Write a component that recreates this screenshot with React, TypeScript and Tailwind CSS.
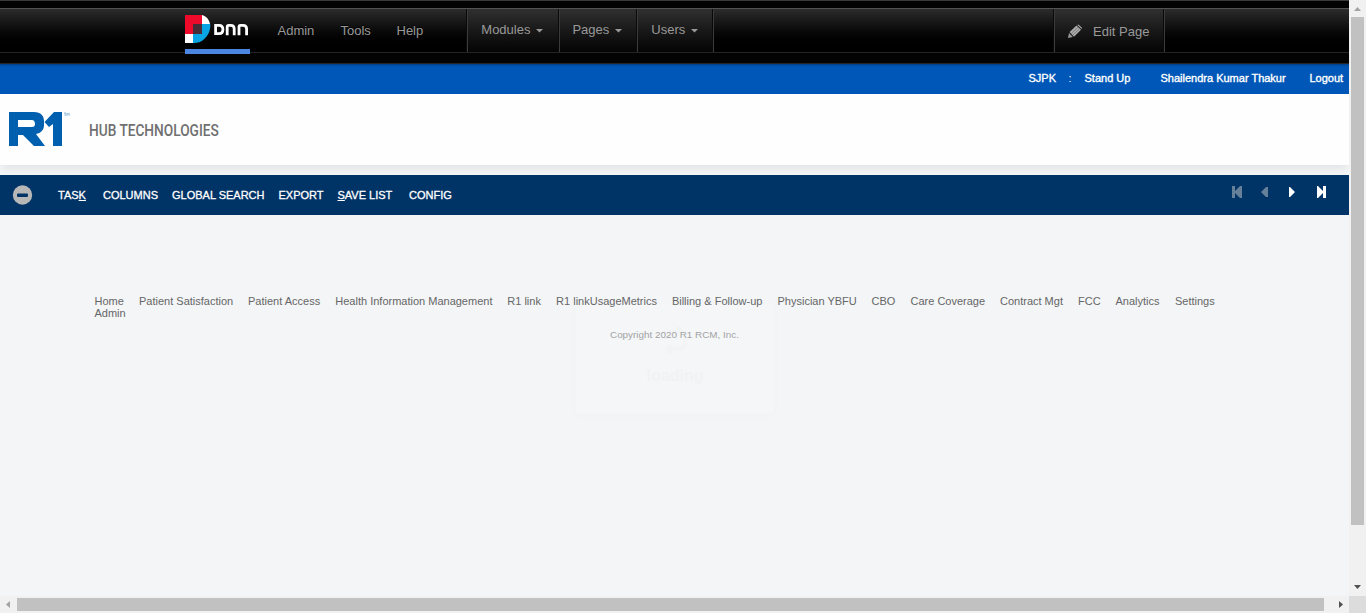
import React from "react";

const footerLinks: { label: string; slot: string }[] = [
  { label: "Home", slot: "w-[44.5px]" },
  { label: "Patient Satisfaction", slot: "w-[109px]" },
  { label: "Patient Access", slot: "w-[87.3px]" },
  { label: "Health Information Management", slot: "w-[172px]" },
  { label: "R1 link", slot: "w-[48.8px]" },
  { label: "R1 linkUsageMetrics", slot: "w-[115.8px]" },
  { label: "Billing & Follow-up", slot: "w-[105.6px]" },
  { label: "Physician YBFU", slot: "w-[94px]" },
  { label: "CBO", slot: "w-[39px]" },
  { label: "Care Coverage", slot: "w-[89.5px]" },
  { label: "Contract Mgt", slot: "w-[78px]" },
  { label: "FCC", slot: "w-[37.5px]" },
  { label: "Analytics", slot: "w-[59.5px]" },
  { label: "Settings", slot: "w-[45px]" },
];

function DnnLogo() {
  return (
    <div className="flex h-[45px] w-[65px] flex-col justify-between border-b-[5px] border-[#4b86e2] pt-[6px]">
      <svg width="65" height="30" viewBox="0 0 65 30">
        <path d="M0 0h17v9H8v10H0z" fill="#ef0a2b" />
        <path d="M17 0c4 1 7 4 8 9h-8z" fill="#fff" />
        <path d="M17 9h8.200c.5 6-1.500 11-6 15-3 3-6 4-11.200 4v-9h9z" fill="#08a4e4" />
        <path d="M8 9h9v10H8z" fill="#472b35" />
        <path d="M0 19h8v9H0z" fill="#fff" />
        <g fill="none" stroke="#fff" strokeWidth="2.800">
          <path d="M30.600 10.400h3.500c2.600 0 3.800 1.500 3.800 4.100s-1.200 4.200-3.800 4.200h-3.500z" />
          <path d="M42.200 20.300v-8.400q0-1.500 1.500-1.500h2.200q3.300 0 3.300 3.300v6.600" />
          <path d="M54 20.300v-8.400q0-1.500 1.500-1.500h2.500q3.600 0 3.600 3.300v6.600" />
        </g>
      </svg>
    </div>
  );
}

function MenuTab({ label, width }: { label: string; width: string }) {
  return (
    <div className={"flex items-start gap-[6px] border-l border-[#3b3b3b] bg-gradient-to-b from-[#303030] to-[#050505] pt-[13px] shadow-[-1px_0_0_#090909] " + width}>
      <span className="leading-4">{label}</span>
      <svg className="mt-[7px]" width="7" height="4" viewBox="0 0 7 4"><path d="M0 0h7L3.500 3.500z" fill="#999" /></svg>
    </div>
  );
}

function AdminBar() {
  return (
    <div className="h-16 border-b border-t border-b-[#252525] border-t-[#3b3b3b] bg-[#030303] pt-[7px] text-[13px] text-[#999]">
      <div className="flex h-[45px] border-b border-t border-b-[#242424] border-t-[#535353] bg-gradient-to-b from-[#2c2c2c] to-black pl-[185px]">
        <DnnLogo />
        <div className="flex w-[217px] pl-[27.500px] pt-[14px] leading-4 [text-shadow:0_-1px_0_#000]">
          <span className="w-[63px]">Admin</span>
          <span className="w-[56px]">Tools</span>
          <span>Help</span>
        </div>
        <MenuTab label="Modules" width="w-[92px] pl-[13.3px]" />
        <MenuTab label="Pages" width="w-[78px] pl-[12.4px]" />
        <MenuTab label="Users" width="w-[76px] pl-[13.3px]" />
        <div className="w-[341px] border-l border-[#3b3b3b] shadow-[-1px_0_0_#090909]" />
        <div className="flex w-[110px] border-l border-[#3b3b3b] bg-gradient-to-b from-[#303030] to-[#050505] pl-[13px] pt-[15px] shadow-[-1px_0_0_#090909]">
          <svg width="15" height="15" viewBox="0 0 15 15">
            <path d="M0 14l1-5 3.800 4z" fill="#999" />
            <path d="M1.600 8L8.500 1.400 13 5.800 6 12.800z" fill="#aaa" />
            <path d="M9.300.900Q10 .300 11 1l2.700 2.600q.600.800 0 1.500z" fill="#aaa" />
            <path d="M3.600 9.200l6.600-6.200M5 10.900l6.500-6.300" stroke="#555" strokeWidth=".5" />
          </svg>
          <span className="ml-[10px] leading-4">Edit Page</span>
        </div>
        <div className="w-px border-l border-[#3b3b3b] shadow-[-1px_0_0_#090909]" />
      </div>
    </div>
  );
}

function UserBar() {
  return (
    <div className="flex h-[30px] bg-[linear-gradient(#003f86,#0053b0_2px,#0057b7_4px)] pl-[1028.500px] pt-[6px] text-[11px] leading-4 text-white [-webkit-text-stroke:0.350px_white]">
      <span className="w-[40px]">SJPK</span>
      <span className="w-[16px] [-webkit-text-stroke:0]">:</span>
      <span className="w-[76px]">Stand Up</span>
      <span className="w-[149px]">Shailendra Kumar Thakur</span>
      <span>Logout</span>
    </div>
  );
}

function Brand() {
  return (
    <div className="flex h-[71px] bg-[#fefefe] pl-[9px] pt-[18px] shadow-[0_6px_8px_-2px_rgba(0,0,0,0.07)]">
      <svg width="61" height="35" viewBox="0 0 61 35">
        <path fillRule="evenodd" d="M0 0h25c7 0 10 4 10 9v4c0 5-3 8-8 9l9 12H25L14 23H9v11H0zM9 8v7h14c2 0 3-1 3-3s-1-4-3-4z" fill="#0060af" />
        <path d="M35.500 10L45 0h8v34h-9V12l-4 3z" fill="#0060af" />
        <path d="M57 .800h-1.500v1H57v1.500h-1.600M58 4V1l1 1.500L60.200 1v3" stroke="#70a7d2" strokeWidth=".6" fill="none" />
      </svg>
      <span className="ml-[19px] mt-[9px] w-[130px] origin-left scale-x-[0.855] whitespace-nowrap font-['Roboto',sans-serif] text-[16px] font-medium leading-5 text-[#707070]">
        HUB TECHNOLOGIES
      </span>
    </div>
  );
}

function Toolbar() {
  return (
    <div className="mt-[10px] flex h-10 bg-[#003366] text-[11px] text-white">
      <svg className="ml-[12px] mt-[10px]" width="21" height="21" viewBox="0 0 21 21">
        <circle cx="10.500" cy="10" r="9.700" fill="#b7b7b7" />
        <rect x="5" y="8.500" width="11" height="3.500" rx="1" fill="#003366" />
      </svg>
      <div className="flex w-[1199px] whitespace-nowrap pl-[25px] pt-[12px] leading-4 [-webkit-text-stroke:0.300px_white]">
        <span className="w-[45px]">TAS<u>K</u></span>
        <span className="w-[69px]">COLUMNS</span>
        <span className="w-[106.500px]">GLOBAL SEARCH</span>
        <span className="w-[59px]">EXPORT</span>
        <span className="w-[71.500px]"><u>S</u>AVE LIST</span>
        <span>CONFIG</span>
      </div>
      <svg className="mt-[11px]" width="94" height="12" viewBox="0 0 94 12">
        <g fill="#668099"><path d="M0 0h3v5l5-5h2v12H8L3 7v5H0zM29 6l5-5h2v10h-2z" /></g>
        <g fill="#fff"><path d="M57 1h1l5 5-5 5h-1zM85 0h1l5 5V0h3v12h-3V7l-5 5h-1z" /></g>
      </svg>
    </div>
  );
}

function LoadingDialog() {
  return (
    <div className="absolute left-[576px] top-[304px] flex h-[109px] w-[198px] flex-col items-center rounded-[3px] bg-white/15 shadow-[0_3px_14px_4px_rgba(0,0,0,0.006)]">
      <svg className="mt-[22px]" width="24" height="28" viewBox="0 0 24 28" fill="none" stroke="#f1f3f5" strokeWidth="3.500">
        <path d="M2 13V8q0-3 3-3h13m-4-4l4 4-4 4M22 13v5q0 5-5 5H4m4-4l-4 4 4 4" />
      </svg>
      <span className="mt-[12px] text-[16px] font-bold leading-5 text-[#f0f2f4]">loading</span>
    </div>
  );
}

function Footer() {
  return (
    <footer className="relative pt-[80px] text-[11px] leading-3 text-[#666]">
      <nav className="ml-[94.500px]">
        <div className="flex whitespace-nowrap">
          {footerLinks.map((l) => <span key={l.label} className={"shrink-0 " + l.slot}>{l.label}</span>)}
        </div>
        <div>Admin</div>
      </nav>
      <p className="mt-[10px] text-center text-[9.900px] text-[#a3a3a3]">Copyright 2020 R1 RCM, Inc.</p>
    </footer>
  );
}

export default function App() {
  return (
    <div className="grid h-[613px] w-[1366px] grid-cols-[1349px_17px] grid-rows-[596px_17px] overflow-hidden bg-[#f1f1f1] font-['Liberation_Sans',Arial,sans-serif]">
      <main className="relative overflow-hidden bg-[#f3f5f7]">
        <LoadingDialog />
        <AdminBar />
        <UserBar />
        <Brand />
        <Toolbar />
        <Footer />
      </main>
      <div className="flex flex-col items-center justify-between py-[7px]">
        <svg width="7" height="4" viewBox="0 0 7 4"><path d="M0 4L3.500 0 7 4z" fill="#a3a3a3" /></svg>
        <div className="mb-auto mt-[6px] h-[508px] w-[13px] bg-[#c1c1c1]" />
        <svg width="7" height="4" viewBox="0 0 7 4"><path d="M0 0h7L3.500 4z" fill="#505050" /></svg>
      </div>
      <div className="flex items-center pl-[6px]">
        <svg width="4" height="7" viewBox="0 0 4 7"><path d="M4 0v7L0 3.500z" fill="#a3a3a3" /></svg>
        <div className="ml-[7px] h-[13px] w-[1307px] bg-[#c1c1c1]" />
        <svg className="ml-[15px]" width="4" height="7" viewBox="0 0 4 7"><path d="M0 0v7l4-3.500z" fill="#505050" /></svg>
      </div>
      <div className="bg-[#dcdcdc]" />
    </div>
  );
}
